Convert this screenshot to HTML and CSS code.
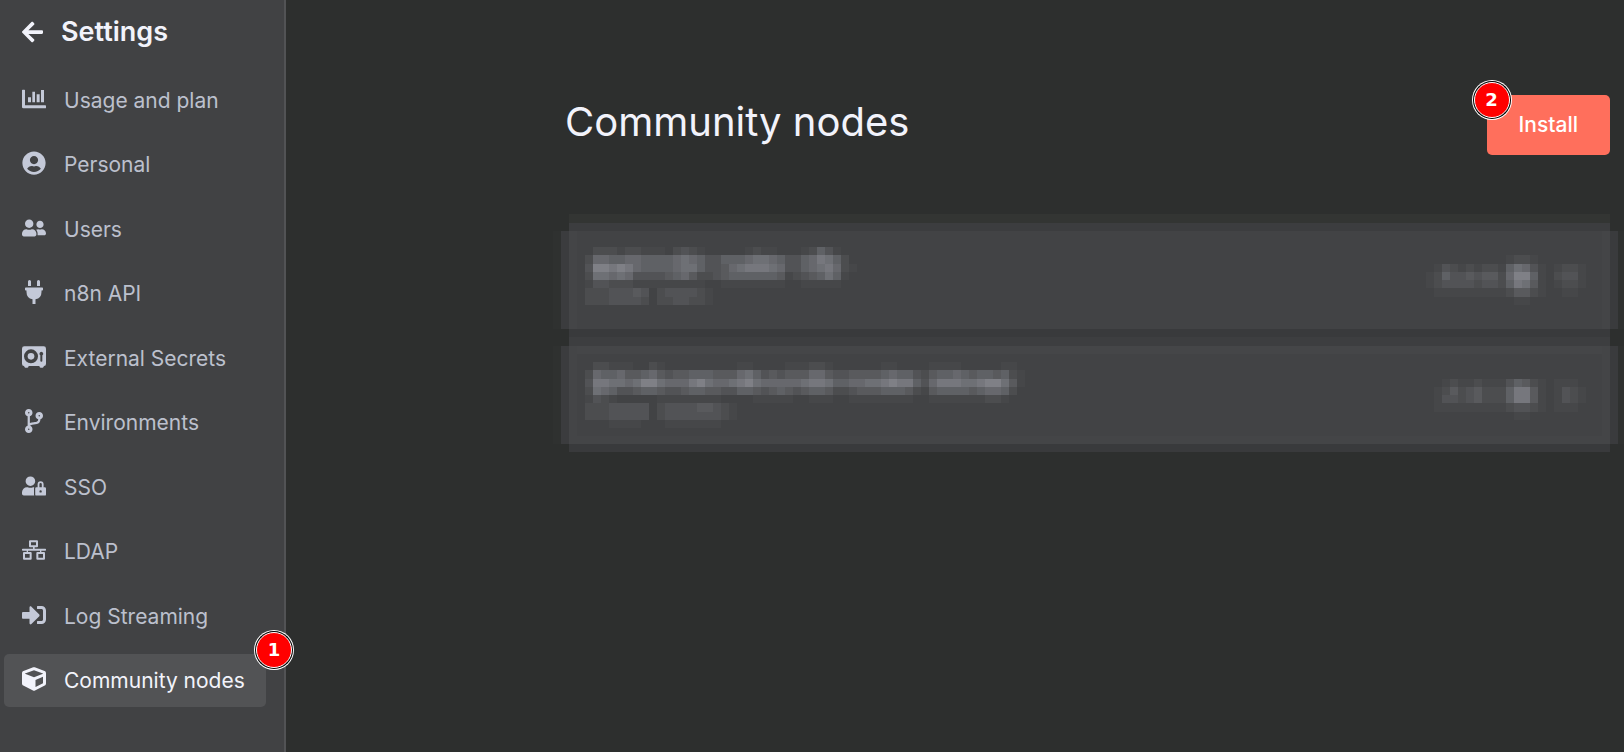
FILE: index.html
```html
<!DOCTYPE html>
<html lang="en">
<head>
<meta charset="utf-8">
<title>Settings - Community nodes</title>
<link rel="stylesheet" href="styles.css">
</head>
<body>
<div class="app">
  <aside class="sidebar">
    <a class="back" href="#">
      <svg class="back-icon" viewBox="0 0 448 512" aria-hidden="true"><path d="M257.5 445.1l-22.2 22.2c-9.4 9.4-24.6 9.4-33.9 0L7 273c-9.4-9.4-9.4-24.6 0-33.9L201.4 44.7c9.4-9.4 24.6-9.4 33.9 0l22.2 22.2c9.5 9.5 9.3 25-.4 34.3L136.6 216H424c13.3 0 24 10.7 24 24v32c0 13.3-10.7 24-24 24H136.6l120.5 114.8c9.8 9.3 10 24.8.4 34.3z"/></svg>
      <span>Settings</span>
    </a>
    <nav class="menu">
      <a class="item" href="#"><svg class="icon" viewBox="0 0 72 72" aria-hidden="true"><path d="M2 8h5q2 0 2 2v45h61q2 0 2 2v5q0 2-2 2H4q-4 0-4-4V10q0-2 2-2zM18 31h9v15h-9zM31 14h8v32h-8zM44 22h9v24h-9zM57 9h9v37h-9z"/></svg>Usage and plan</a>
      <a class="item" href="#"><svg class="icon" viewBox="0 0 496 512" aria-hidden="true"><path d="M248 8C111 8 0 119 0 256s111 248 248 248 248-111 248-248S385 8 248 8zm0 96c48.6 0 88 39.4 88 88s-39.4 88-88 88-88-39.4-88-88 39.4-88 88-88zm0 344c-58.7 0-111.3-26.6-146.5-68.2 18.8-35.4 55.6-59.8 98.5-59.8 2.4 0 4.8.4 7.1 1.1 13 4.2 26.6 6.9 40.9 6.9 14.3 0 28-2.7 40.9-6.9 2.3-.7 4.7-1.1 7.1-1.1 42.9 0 79.7 24.4 98.5 59.8C359.3 421.4 306.7 448 248 448z"/></svg>Personal</a>
      <a class="item" href="#"><svg class="icon" viewBox="0 0 640 512" aria-hidden="true"><path d="M192 256c61.9 0 112-50.1 112-112S253.9 32 192 32 80 82.1 80 144s50.1 112 112 112zm76.8 32h-8.3c-20.8 10-43.9 16-68.5 16s-47.6-6-68.5-16h-8.3C51.6 288 0 339.6 0 403.2V432c0 26.5 21.5 48 48 48h288c26.5 0 48-21.5 48-48v-28.8c0-63.6-51.6-115.2-115.2-115.2zM480 256c53 0 96-43 96-96s-43-96-96-96-96 43-96 96 43 96 96 96zm48 32h-3.8c-13.9 4.8-28.6 8-44.2 8s-30.3-3.2-44.2-8H432c-20.4 0-39.2 5.9-55.7 15.4 24.4 26.3 39.7 61.2 39.7 99.8v38.4c0 2.2-.5 4.3-.6 6.4H592c26.5 0 48-21.5 48-48 0-61.9-50.1-112-112-112z"/></svg>Users</a>
      <a class="item" href="#"><svg class="icon" viewBox="0 0 384 512" aria-hidden="true"><path d="M320,32a32,32,0,0,0-64,0v96h64Zm48,128H16A16,16,0,0,0,0,176v32a16,16,0,0,0,16,16H32v32A160.07,160.07,0,0,0,160,412.8V512h64V412.8A160.07,160.07,0,0,0,352,256V224h16a16,16,0,0,0,16-16V176A16,16,0,0,0,368,160ZM128,32a32,32,0,0,0-64,0v96h64Z"/></svg>n8n API</a>
      <a class="item" href="#"><svg class="icon" viewBox="0 0 72 72" aria-hidden="true"><path fill-rule="evenodd" d="M7 4h58q7 0 7 7v45q0 7-6 7l-2 4q-1 1-2 1h-6q-2 0-3-2l-1-3H20l-1 3q-1 2-3 2h-6q-1 0-2-1l-2-4q-6 0-6-7V11q0-7 7-7zM27 13a21 21 0 1 0 0 42 21 21 0 1 0 0-42zM58 20a6 6 0 0 0-3 11v17q0 2 3 2t3-2V31a6 6 0 0 0-3-11z"/><circle cx="27" cy="34" r="10"/></svg>External Secrets</a>
      <a class="item" href="#"><svg class="icon" viewBox="0 0 384 512" aria-hidden="true"><path d="M384 144c0-44.2-35.8-80-80-80s-80 35.8-80 80c0 36.4 24.3 67.1 57.5 76.8-.6 16.1-4.2 28.5-11 36.9-15.4 19.2-49.3 22.4-85.2 25.7-28.2 2.6-57.4 5.4-81.3 16.9v-144c32.5-10.2 56-40.5 56-76.3 0-44.2-35.8-80-80-80S0 35.8 0 80c0 35.8 23.5 66.1 56 76.3v199.3C23.5 365.9 0 396.2 0 432c0 44.2 35.8 80 80 80s80-35.8 80-80c0-34-21.2-63.1-51.2-74.6 3.1-5.2 7.8-9.8 14.9-13.4 16.2-8.2 40.4-10.4 66.1-12.8 42.2-3.9 90-8.4 118.2-43.4 14-17.4 21.1-39.8 21.6-67.9 31.6-10.8 54.4-40.7 54.4-75.9zM80 64c8.8 0 16 7.2 16 16s-7.2 16-16 16-16-7.2-16-16 7.2-16 16-16zm0 384c-8.8 0-16-7.2-16-16s7.2-16 16-16 16 7.2 16 16-7.2 16-16 16zm224-320c8.8 0 16 7.2 16 16s-7.2 16-16 16-16-7.2-16-16 7.2-16 16-16z"/></svg>Environments</a>
      <a class="item" href="#"><svg class="icon" viewBox="0 0 640 512" aria-hidden="true"><path d="M224 256A128 128 0 1 0 96 128a128 128 0 0 0 128 128zm96 64a63.08 63.08 0 0 1 8.1-30.5c-4.8-.5-9.5-1.5-14.5-1.5h-16.7a174.08 174.08 0 0 1-145.8 0h-16.7A134.43 134.43 0 0 0 0 422.4V464a48 48 0 0 0 48 48h280.9a63.54 63.54 0 0 1-8.9-32zm288-32h-32v-80a80 80 0 0 0-160 0v80h-32a32 32 0 0 0-32 32v160a32 32 0 0 0 32 32h224a32 32 0 0 0 32-32V320a32 32 0 0 0-32-32zM496 432a32 32 0 1 1 32-32 32 32 0 0 1-32 32zm32-144h-64v-80a32 32 0 0 1 64 0z"/></svg>SSO</a>
      <a class="item" href="#"><svg class="icon" viewBox="0 0 72 72" aria-hidden="true"><path fill-rule="evenodd" d="M24 7h21q3 0 3 3v15q0 3-3 3h-7v4h32q2 0 2 2v2q0 2-2 2H58v4h8q3 0 3 3v17q0 3-3 3H46q-3 0-3-3V45q0-3 3-3h8v-4H18v4h8q3 0 3 3v17q0 3-3 3H6q-3 0-3-3V45q0-3 3-3h8v-4H2q-2 0-2-2v-2q0-2 2-2h31v-4h-9q-3 0-3-3V10q0-3 3-3zM27 13v9h15v-9zM9 48v11h14V48zM49 48v11h14V48z"/></svg>LDAP</a>
      <a class="item" href="#"><svg class="icon" viewBox="0 0 512 512" aria-hidden="true"><path d="M416 448h-84c-6.6 0-12-5.4-12-12v-40c0-6.6 5.4-12 12-12h84c17.7 0 32-14.3 32-32V160c0-17.7-14.3-32-32-32h-84c-6.6 0-12-5.4-12-12V76c0-6.6 5.4-12 12-12h84c53 0 96 43 96 96v192c0 53-43 96-96 96zm-47-201L201 79c-15-15-41-4.5-41 17v96H24c-13.3 0-24 10.7-24 24v96c0 13.3 10.7 24 24 24h136v96c0 21.5 26 32 41 17l168-168c9.3-9.4 9.3-24.6 0-34z"/></svg>Log Streaming</a>
      <a class="item active" href="#" aria-current="page"><svg class="icon" viewBox="0 0 512 512" aria-hidden="true"><path d="M239.1 6.3l-208 78c-18.7 7-31.1 25-31.1 45v225.1c0 18.2 10.3 34.8 26.5 42.9l208 104c13.5 6.8 29.4 6.8 42.9 0l208-104c16.3-8.1 26.5-24.8 26.5-42.9V129.3c0-20-12.4-37.9-31.1-44.9l-208-78C262 2.2 250 2.2 239.1 6.3zM256 68.4l192 72v1.1l-192 78-192-78v-1.1l192-72zm32 356V275.5l160-65v133.9l-160 80z"/></svg>Community nodes<span class="badge badge-nav">1</span></a>
    </nav>
  </aside>
  <main class="main">
    <header class="header">
      <h1 class="title">Community nodes</h1>
      <div class="action">
        <button class="install" type="button">Install</button>
        <span class="badge badge-install">2</span>
      </div>
    </header>
    <ul class="packages">
      <li class="card">
        <svg class="mosaic" data-rows="0222122111023210000012110001253100 2665566555567653355567765335687520 3998986555567753346788876335678621 2776763333456422345555554123457510 1332221111111110011111111001111100 2223334302333321 2223333202233221 0"></svg>
        <svg class="mosaic" data-rows="0 00000000001221 01321212215763101221 12533434426995102331 12333323325874101221 01111111112442100110 00000000000110 0"></svg>
      </li>
      <li class="card">
        <svg class="mosaic" data-rows="0221110021000000000110000111221000000110000111100000110 2655644564344555444675343444664334444565532455654554521 3887767997666897667897666667887556677898853688877899741 2765334554334554433554345434554223444555421455554566520 1321000001111111100001111100111001111111100111111122100 2223333302333344321 2223333302333333321 0001111000111111100"></svg>
        <svg class="mosaic" data-rows="0 0 00121121113542101110 01242342225884101321 01332342225884101321 01111111112332101110 00000000000110 0"></svg>
      </li>
    </ul>
  </main>
</div>
<script src="mosaic.js"></script>
</body>
</html>
```
FILE: styles.css
```css
* {
  box-sizing: border-box;
}

body {
  margin: 0;
  background: #2d2f2e;
  color: #f2f3fb;
  font-family: Inter, "Liberation Sans", sans-serif;
}

a {
  color: inherit;
  text-decoration: none;
}

.app {
  display: flex;
  min-height: 100vh;
}

.sidebar {
  position: relative;
  z-index: 1;
  flex: 0 0 286px;
  display: flex;
  flex-direction: column;
  gap: 26px;
  padding: 16px 18px 45px 4px;
  background: #414244;
  border-right: 2px solid #525355;
}

.back {
  display: flex;
  align-items: center;
  gap: 18px;
  padding-left: 18px;
  font-size: 27px;
  font-weight: 600;
  line-height: 32px;
}

.back-icon {
  width: 21px;
  height: 24px;
  fill: currentColor;
}

.menu {
  flex: 1;
  display: flex;
  flex-direction: column;
  justify-content: space-between;
}

.item {
  position: relative;
  display: flex;
  align-items: center;
  gap: 18px;
  padding: 0 18px;
  border-radius: 5px;
  color: #bcc0cd;
  font-size: 21px;
  line-height: 53px;
  white-space: nowrap;
}

.icon {
  flex: none;
  width: 24px;
  height: 24px;
  margin-bottom: 3px;
  fill: #c4c9d8;
}

.active {
  background: #525355;
  color: #f2f3fb;
}

.active .icon {
  fill: #f2f3fb;
}

.badge {
  position: absolute;
  width: 36px;
  height: 36px;
  border: 1px solid #fff;
  border-radius: 50%;
  background: #f00;
  box-shadow: 0 0 0 1px #000, 0 0 0 2px #fff;
  color: #fff;
  font-family: "DejaVu Sans", sans-serif;
  font-size: 18px;
  font-weight: 700;
  line-height: 34px;
  text-align: center;
}

.badge-nav {
  top: -22px;
  right: -26px;
}

.badge-install {
  top: -13px;
  left: -13px;
}

.main {
  flex: 1;
  min-width: 0;
  overflow: hidden;
  padding: 95px 14px 40px 279px;
}

.header {
  display: flex;
  align-items: center;
  justify-content: space-between;
  margin-bottom: 76px;
}

.title {
  margin: 0;
  padding-bottom: 7px;
  font-size: 40px;
  font-weight: 400;
  line-height: 52px;
}

.action {
  position: relative;
}

.install {
  padding: 0 32px;
  border: 0;
  border-radius: 5px;
  background: #ff6f5c;
  color: #fff;
  font: 500 21px/60px Inter, sans-serif;
}

.packages {
  display: grid;
  gap: 17px;
  margin: 0;
  padding: 0 0 0 4px;
  list-style: none;
}

.card {
  display: flex;
  justify-content: space-between;
  padding: 16px 24px 16px 16px;
  background: #424345;
  box-shadow:
    inset 8px 0 #444547,
    inset -8px 0 #444547,
    -8px 0 #3b3c3e,
    8px 0 #3a3b3d,
    0 8px #393a3c,
    0 -9px #3d3e40,
    -16px 0 #2f3130,
    16px 0 #2f3130;
}

.card:first-child {
  box-shadow:
    inset 8px 0 #444547,
    inset -8px 0 #444547,
    -8px 0 #3b3c3e,
    8px 0 #3a3b3d,
    0 8px #393a3c,
    0 -8px #3c3d3f,
    0 -17px #333533,
    -16px 0 #2f3130,
    16px 0 #2f3130;
}

.card:last-child {
  background: linear-gradient(#454648 8px, #424345 8px, #424345 90px, #444547 90px);
}

.mosaic {
  display: block;
  flex: none;
  fill: #f0f3ff;
}
```
FILE: mosaic.js
```js
// Draws each censored strip: one digit per cell, 0 = clear, 9 = brightest.
const CELL_W = 8;
const STRIP_H = 66;

document.querySelectorAll(".mosaic").forEach((svg) => {
  const rows = svg.dataset.rows.split(" ");
  const columns = Math.max(...rows.map((row) => row.length));
  const edge = (row) => Math.round((row * STRIP_H) / rows.length);
  svg.setAttribute("width", columns * CELL_W);
  svg.setAttribute("height", STRIP_H);
  svg.setAttribute("shape-rendering", "crispEdges");
  rows.forEach((row, y) => {
    [...row].forEach((level, x) => {
      if (level === "0") return;
      const cell = document.createElementNS("http://www.w3.org/2000/svg", "rect");
      cell.setAttribute("x", x * CELL_W);
      cell.setAttribute("y", edge(y));
      cell.setAttribute("width", CELL_W);
      cell.setAttribute("height", edge(y + 1) - edge(y));
      cell.setAttribute("opacity", (Math.pow(Number(level), 1.2) * 0.025).toFixed(3));
      svg.append(cell);
    });
  });
});
```
